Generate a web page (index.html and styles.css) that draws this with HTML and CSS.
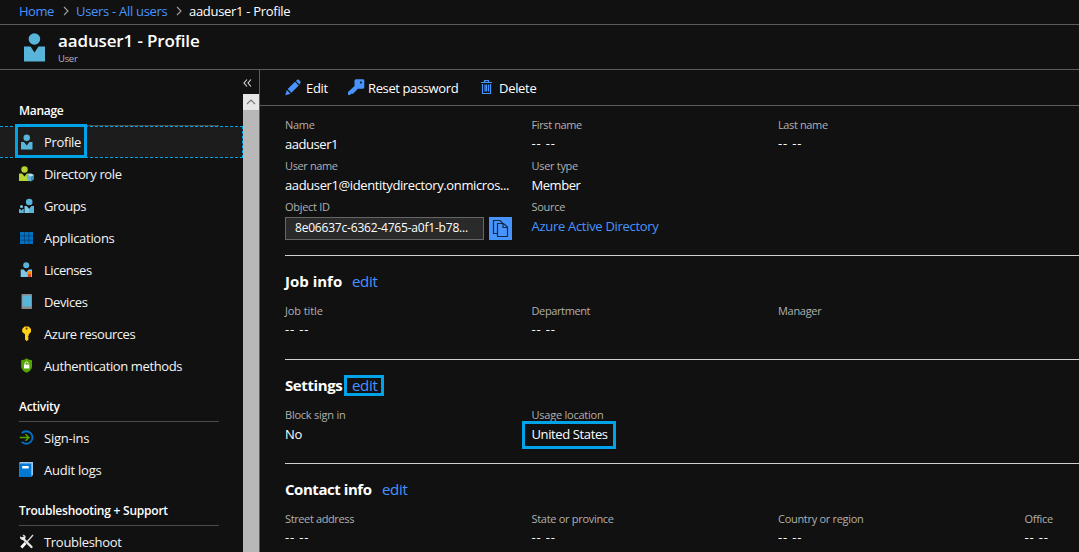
FILE: index.html
```html
<!DOCTYPE html>
<html lang="en">
<head>
<meta charset="utf-8">
<title>aaduser1 - Profile</title>
<link rel="stylesheet" href="styles.css">
</head>
<body>
<nav class="crumbs">
  <a class="crumb crumb-home">Home</a>
  <svg class="sep" width="6" height="10" viewBox="0 0 6 10"><path d="M1 1l4 4-4 4"/></svg>
  <a class="crumb crumb-users">Users - All users</a>
  <svg class="sep" width="6" height="10" viewBox="0 0 6 10"><path d="M1 1l4 4-4 4"/></svg>
  <span class="crumb crumb-current">aaduser1 - Profile</span>
</nav>
<header class="head">
  <svg class="avatar" width="21" height="29" viewBox="0 0 21 29"><circle cx="10.4" cy="6" r="5.8" fill="#59b4d9"/><path d="M0 13.500h6.500l4 6 4-6H21V28.500H0z" fill="#59b4d9"/></svg>
  <div class="titles">
    <h1 class="title">aaduser1 - Profile</h1>
    <div class="subtitle">User</div>
  </div>
</header>
<div class="body">
  <aside class="side">
    <div class="side-top"><svg width="9" height="8" viewBox="0 0 9 8"><path d="M4 .5L1 4l3 3.500M8 .5L5 4l3 3.500" fill="none" stroke="#ddd" stroke-width="1.100"/></svg></div>
    <div class="side-main">
      <div class="menu">
        <h2 class="group group-first"><span>Manage</span></h2>
        <div class="item selected">
          <svg class="ico" width="16" height="16" viewBox="0 0 16 16"><circle cx="7.700" cy="3.700" r="3.200" fill="#59b4d9"/><path d="M2 8h3l2.700 3.500L10.500 8H13.500v7.500H2z" fill="#59b4d9"/></svg>
          <span>Profile</span>
          <div class="mark"></div>
        </div>
        <div class="item">
          <svg class="ico" width="16" height="16" viewBox="0 0 16 16"><circle cx="5.500" cy="3.500" r="3.200" fill="#b8d432"/><path d="M0 7.500h3l2.500 3L8 7.500h3v7.500H0z" fill="#b8d432"/><path d="M8.500 9l3.300-1.500L15 9v4.500l-3.200 2-3.300-2z" fill="#3e8db5"/><path d="M8.500 9l3.300-1.500L15 9l-3.200 1.800z" fill="#b9dff0"/><path d="M8.500 9l3.300 1.800v4.700l-3.300-2z" fill="#68b4db"/></svg>
          <span class="snug">Directory role</span>
        </div>
        <div class="item">
          <svg class="ico" width="16" height="16" viewBox="0 0 16 16"><circle cx="10.200" cy="4" r="3.300" fill="#59b4d9"/><path d="M5.500 8h2.300l2.400 3 2.400-3H15v7H5.500z" fill="#7fc8e8"/><path d="M10.200 11l2.400-3H15v7h-4.800z" fill="#59b4d9"/><circle cx="2.500" cy="8.500" r="1.500" fill="#7fc8e8"/><path d="M0 11h1.200l1.300 1.500L3.800 11h1v4H0z" fill="#59b4d9"/></svg>
          <span class="tight">Groups</span>
        </div>
        <div class="item">
          <svg class="ico" width="16" height="16" viewBox="0 0 16 16"><path d="M1 2h13v12H1z" fill="#0a3b68"/><path d="M1 2h4v3.500H1zM5.700 2h3.800v3.500H5.700zM10.200 2H14v3.500h-3.800zM1 6.300h4v3.500H1zM5.700 6.300h3.800v3.500H5.700zM10.200 6.300H14v3.500h-3.800zM1 10.500h4V14H1zM5.700 10.500h3.800V14H5.700zM10.200 10.500H14V14h-3.800z" fill="#0072c6"/></svg>
          <span>Applications</span>
        </div>
        <div class="item">
          <svg class="ico" width="16" height="16" viewBox="0 0 16 16"><circle cx="7.200" cy="3.200" r="3" fill="#59b4d9"/><path d="M1.700 7.500h3l2.500 2.800 2.500-2.800h3.300v7.500H1.700z" fill="#7fc8e8"/><path d="M8.800 10.500h3.200V15H8.800z" fill="#d8491e"/><circle cx="10.400" cy="10.500" r="1.800" fill="#ff8c00"/></svg>
          <span class="tight">Licenses</span>
        </div>
        <div class="item">
          <svg class="ico" width="16" height="16" viewBox="0 0 16 16"><rect x="2.500" y="0" width="10.500" height="15" rx=".8" fill="#8a8a8a"/><path d="M3.500 1.500H12V12.500H3.500z" fill="#59b4d9"/></svg>
          <span class="snug">Devices</span>
        </div>
        <div class="item">
          <svg class="ico" width="16" height="16" viewBox="0 0 16 16"><path d="M5.500.5h4.200L12 3v3L9.800 8.300v1.200l-1 .8 1 .9-1 .9 1 1-2 2.200-1.800-1.700V8.300L3.200 6V3z" fill="#fcd116"/><circle cx="7.600" cy="2.600" r="1.100" fill="#5c4b0e"/></svg>
          <span class="tight">Azure resources</span>
        </div>
        <div class="item">
          <svg class="ico" width="16" height="16" viewBox="0 0 16 16"><path d="M7.600.3C9.500 1.800 11.500 2 13 2.200V8c0 3.500-2.500 5.500-5.400 6.800C4.700 13.500 2.200 11.500 2.200 8V2.200C3.800 2 5.800 1.800 7.600.3z" fill="#57a300"/><path d="M5 6.500h5.300v4H5z" fill="#fff"/><path d="M6 6.800V5.300c0-1.800 3.200-1.800 3.200 0v.4" fill="none" stroke="#fff"/></svg>
          <span class="snug">Authentication methods</span>
        </div>
        <h2 class="group"><span>Activity</span></h2>
        <div class="item">
          <svg class="ico" width="16" height="16" viewBox="0 0 16 16"><path d="M2.800 3.200A6.200 6.200 0 1 1 2.800 11.800" fill="none" stroke="#0072c6" stroke-width="1.900"/><path d="M.8 7.500H9.500M6.500 4.300L9.900 7.500 6.500 10.700" fill="none" stroke="#57a300" stroke-width="1.500"/></svg>
          <span class="loose">Sign-ins</span>
        </div>
        <div class="item">
          <svg class="ico" width="16" height="16" viewBox="0 0 16 16"><path d="M1 0h13v13.500H12.500V15H.3V.7z" fill="#9fc5e8"/><path d="M.3 1.500h12V15H.3z" fill="#0078d4"/><path d="M3.200 4h6.500v2.500H3.200z" fill="#fff"/></svg>
          <span class="loose">Audit logs</span>
        </div>
        <h2 class="group"><span class="loose">Troubleshooting + Support</span></h2>
        <div class="item">
          <svg class="ico" width="16" height="16" viewBox="0 0 16 16"><path d="M3.500 4L12.500 13" stroke="#e8e8e8" stroke-width="2.400" stroke-linecap="round"/><path d="M1 2.200l2 1.600L4.800 2.600 3.300.7c2.200-.4 3.800 1 3.200 3.600L4.700 6C2.200 6.500.6 4.600 1 2.200z" fill="#e8e8e8"/><path d="M14 1L7.500 8.500" stroke="#ddd" stroke-width="1.300"/><path d="M6.500 9L2.300 13.500" stroke="#fff" stroke-width="2.800"/></svg>
          <span>Troubleshoot</span>
        </div>
      </div>
      <div class="scroll"><div class="scroll-btn"><svg width="10" height="6" viewBox="0 0 10 6"><path d="M1 5l4-4 4 4" fill="none" stroke="#777" stroke-width="1.100"/></svg></div></div>
    </div>
  </aside>
  <main class="content">
    <div class="toolbar">
      <svg class="t-edit" width="17" height="17" viewBox="0 0 17 17"><path d="M.3 16.300L1.800 11 5.500 14.700zM2.700 10L10 2.800l3.700 3.700L6.400 13.800zM10.900 1.900L12.500.6c.8-.6 3.800 2 3.100 3.100l-1.200 1.900z" fill="#4894fe"/></svg>
      <span class="btn-edit">Edit</span>
      <svg class="t-key" width="17" height="17" viewBox="0 0 17 17"><path d="M6.500 1.300L7.500.3h8l.8 1v7.500l-1 1H10l-5 5H3L2 16H0v-3l6.500-6z" fill="#4894fe"/><circle cx="12.900" cy="3.500" r="1.100" fill="#111"/></svg>
      <span class="btn-reset snug">Reset password</span>
      <svg class="t-bin" width="11" height="15" viewBox="0 0 11 15"><path d="M0 2.500h11M3.500 2V.6h4V2M1.500 4v9.500h8V4M4 4.500v7M5.500 4.500v7M7.500 4.500v7" fill="none" stroke="#4894fe" stroke-width="1.200"/></svg>
      <span>Delete</span>
    </div>
    <div class="panel">
      <section class="grid grid-top">
        <div class="field"><span class="label">Name</span><span class="value tight">aaduser1</span></div>
        <div class="field"><span class="label snug">First name</span><span class="value dash">-- --</span></div>
        <div class="field"><span class="label snug">Last name</span><span class="value dash">-- --</span></div>
        <div class="field"></div>
        <div class="field"><span class="label snug">User name</span><span class="value snug">aaduser1@identitydirectory.onmicros...</span></div>
        <div class="field"><span class="label">User type</span><span class="value tight">Member</span></div>
        <div class="field"></div>
        <div class="field"></div>
        <div class="field"><span class="label">Object ID</span>
          <div class="idrow"><div class="idbox"><span class="id">8e06637c-6362-4765-a0f1-b78...</span></div>
          <div class="copy"><svg width="17" height="19" viewBox="0 0 17 19"><path d="M5.500 14.500h-4V1.500H8l2.500 2.500M5.500 4.500h6L15.500 8v9.500h-10zM11 4.500v4h4.500" fill="none" stroke="#15294b" stroke-width="1.200"/></svg></div></div>
        </div>
        <div class="field"><span class="label">Source</span><a class="value link">Azure Active Directory</a></div>
      </section>
      <section class="section">
        <h3 class="heading"><span class="name-job">Job info</span><a class="edit">edit</a></h3>
        <div class="grid">
          <div class="field"><span class="label job-title">Job title</span><span class="value dash">-- --</span></div>
          <div class="field"><span class="label snug">Department</span><span class="value dash">-- --</span></div>
          <div class="field"><span class="label">Manager</span></div>
        </div>
      </section>
      <section class="section">
        <h3 class="heading"><span class="name-settings">Settings</span><a class="edit marked">edit</a></h3>
        <div class="grid">
          <div class="field"><span class="label loose">Block sign in</span><span class="value">No</span></div>
          <div class="field"><span class="label loose">Usage location</span><span class="value marked-value snug">United States</span></div>
        </div>
      </section>
      <section class="section">
        <h3 class="heading"><span class="name-contact">Contact info</span><a class="edit">edit</a></h3>
        <div class="grid">
          <div class="field"><span class="label snug">Street address</span><span class="value dash">-- --</span></div>
          <div class="field"><span class="label">State or province</span><span class="value dash">-- --</span></div>
          <div class="field"><span class="label">Country or region</span><span class="value dash">-- --</span></div>
          <div class="field"><span class="label">Office</span><span class="value dash">-- --</span></div>
        </div>
      </section>
    </div>
  </main>
</div>
</body>
</html>
```

FILE: styles.css
```css
*, *::after { box-sizing: border-box; }
html, body { height: 100%; }
body {
  margin: 0;
  background: #111;
  color: #fff;
  font: 13px/20px "Open Sans", "Noto Sans", sans-serif;
  letter-spacing: -0.3px;
  overflow: hidden;
  display: flex;
  flex-direction: column;
}
h1, h2, h3 { margin: 0; font-weight: 600; }
svg { display: block; flex: none; }
span, a { white-space: nowrap; }
.snug { letter-spacing: -0.38px; }
.tight { letter-spacing: -0.45px; }
.loose { letter-spacing: -0.23px; }

.crumbs {
  flex: none;
  height: 25px;
  padding: 0 0 2px 19px;
  border-bottom: 1px solid #5c5c5c;
  display: flex;
  align-items: center;
}
.crumb { color: #4894fe; flex: none; }
.crumb-home { width: 44px; letter-spacing: -0.5px; }
.crumb-users { width: 100px; }
.crumb-current { color: #fff; }
.sep { margin-right: 7px; fill: none; stroke: #a0a0a0; stroke-width: 1.1; }

.head {
  flex: none;
  height: 45px;
  padding: 8px 0 0 24px;
  border-bottom: 1px solid #5c5c5c;
  display: flex;
}
.titles { margin-left: 13px; }
.title { margin-top: -1px; font-size: 17px; line-height: 18px; letter-spacing: -0.14px; white-space: nowrap; }
.subtitle { font-size: 9.5px; line-height: 14px; margin-top: 2px; color: #b9b4c8; }

.body { flex: 1; min-height: 0; display: flex; }
.side { width: 260px; flex: none; border-right: 1px solid #5c5c5c; display: flex; flex-direction: column; }
.side-top { height: 24px; flex: none; padding: 9px 0 0 243px; }
.side-main { flex: 1; min-height: 0; display: flex; }
.menu { width: 243px; height: 458px; overflow: hidden; }
.group {
  width: 200px;
  height: 40px;
  margin-left: 19px;
  padding-top: 15px;
  border-bottom: 1px solid #4b4b4b;
  font-size: 12px;
}
.group-first { height: 32px; padding-top: 7px; }
.item {
  height: 32px;
  padding-left: 19px;
  display: flex;
  align-items: center;
  gap: 9px;
  color: #f4f4f4;
  position: relative;
}
.selected { background: #1c1c1c; border: 1px dashed #00a2e8; border-left: 0; }
.mark {
  position: absolute;
  left: 15px;
  top: -3px;
  width: 72px;
  height: 34px;
  border: 3px solid #00a2e8;
}
.scroll { width: 16px; background: #b8b8b8; }
.scroll-btn { height: 16px; background: #e6e6e6; display: flex; align-items: center; justify-content: center; }

.content { flex: 1; min-width: 0; overflow: hidden; }
.toolbar {
  height: 36px;
  padding-left: 25px;
  border-bottom: 1px solid #5c5c5c;
  display: flex;
  align-items: center;
}
.t-edit { margin-right: 4px; }
.btn-edit { width: 42px; }
.t-key { margin-right: 3px; }
.btn-reset { width: 113px; }
.t-bin { margin-right: 7px; }

.panel { padding: 9px 0 0 25px; }
.grid { display: grid; grid-template-columns: repeat(4, 246.5px); grid-auto-rows: 41px; }
.grid-top { height: 140px; }
.field { display: flex; flex-direction: column; align-items: flex-start; }
.label { height: 19px; font-size: 11px; color: #b0b0b0; }
.job-title { letter-spacing: -0.1px; }
.value { height: 20px; }
.dash { letter-spacing: 0.85px; margin-top: -1px; }
.link { color: #4894fe; }
.idrow { display: flex; gap: 5px; margin-top: 1px; }
.idbox {
  width: 199px;
  height: 23px;
  padding: 0 0 1px 9px;
  border: 1px solid #666;
  background: #2a2a2a;
  display: flex;
  align-items: center;
}
.id { font-size: 12px; letter-spacing: -0.2px; }
.copy { width: 23px; height: 23px; background: #4894fe; display: flex; align-items: center; justify-content: center; }

.section { height: 104px; padding-top: 15px; border-top: 1px solid #d0d0d0; }
.heading { height: 30px; font-size: 15px; font-weight: 700; display: flex; gap: 10px; }
.name-job { width: 57px; letter-spacing: 0; }
.name-settings { width: 57px; letter-spacing: -0.4px; }
.name-contact { width: 87px; letter-spacing: -0.45px; }
.edit { color: #4894fe; font-weight: 400; }
.marked, .marked-value { position: relative; }
.marked::after, .marked-value::after { content: ""; position: absolute; border: 3px solid #00a2e8; }
.marked::after { left: -8px; top: 0; width: 40px; height: 21px; }
.marked-value::after { left: -10px; top: -3px; width: 94px; height: 28px; }
```
